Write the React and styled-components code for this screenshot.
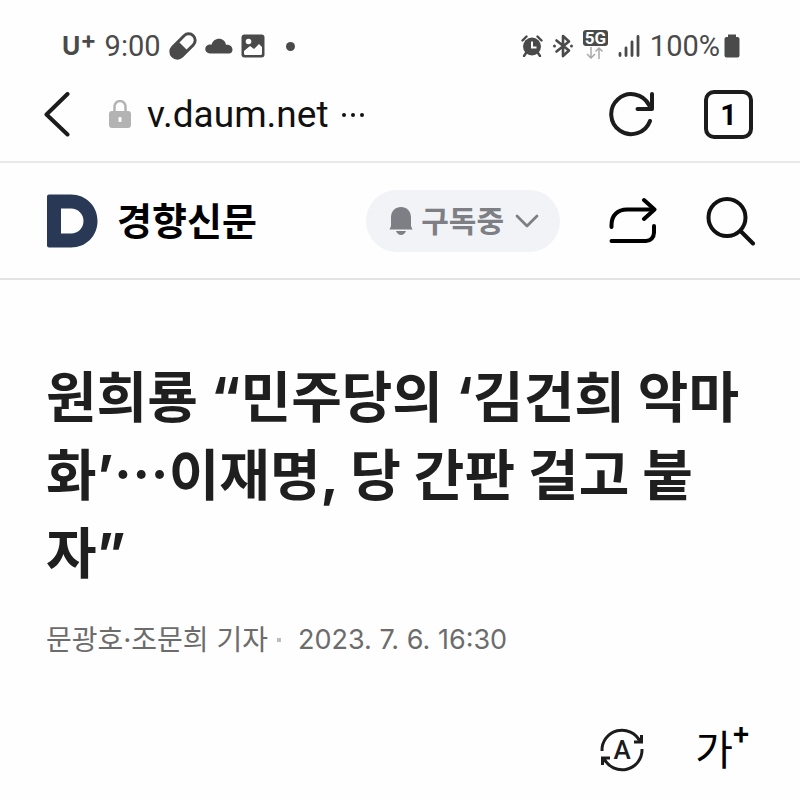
import React from "react";
import styled, { createGlobalStyle } from "styled-components";

const GlobalStyle = createGlobalStyle`
  * {
    box-sizing: border-box;
  }
  body {
    margin: 0;
    background-color: #fefefe;
    color: #1f1f1f;
    font-family: Inter, "Noto Sans CJK KR", sans-serif;
  }
  svg {
    display: block;
    flex-shrink: 0;
  }
`;

const StatusIcons = () => (
  <>
    <svg width="28" height="28" viewBox="0 0 28 28">
      <g transform="rotate(-45 14 14)">
        <rect x="-2" y="6" width="32" height="16" rx="8" fill="#4a4a4a" />
        <path d="M14 9h8a5 5 0 0 1 0 10h-8z" fill="#fefefe" />
      </g>
    </svg>
    <svg width="28" height="16" viewBox="0 0 28 16">
      <path
        d="M5 15.500a4.500 4.500 0 0 1-.5-9c.8 0 1.500.1 2 .3C7.500 3 10.500.8 14 .8c3.800 0 6.300 2.500 7 6 3.500-.3 6.500 1.500 6.500 5 0 2.200-1.500 3.700-3.500 3.700z"
        fill="#4a4a4a"
      />
    </svg>
    <svg width="24" height="24" viewBox="0 0 24 24">
      <rect x="0.500" y="0.500" width="23" height="23" rx="3" fill="#4a4a4a" />
      <circle cx="7.500" cy="7.500" r="2.800" fill="#fefefe" />
      <path d="M3 17l6-5 4 3 5-5 3 3v6.500a1.500 1.500 0 0 1-1.500 1.500h-15A1.500 1.500 0 0 1 3 19.500z" fill="#fefefe" />
    </svg>
  </>
);

const AlarmIcon = () => (
  <svg width="22" height="22" viewBox="0 0 22 22">
    <circle cx="11" cy="11.500" r="9" fill="#4a4a4a" />
    <path d="M1.500 5.500l4-4M20.500 5.500l-4-4M5 18l-2 3M17 18l2 3" stroke="#4a4a4a" strokeWidth="2.400" strokeLinecap="round" />
    <path d="M11 6.500v6h4.500" fill="none" stroke="#fefefe" strokeWidth="2" />
  </svg>
);

const BluetoothIcon = () => (
  <svg width="20" height="24" viewBox="0 0 20 24">
    <path d="M3.500 6.500L16 16.500l-6 5.500V2l6 5.500-12.500 10" fill="none" stroke="#4a4a4a" strokeWidth="2.600" strokeLinejoin="round" strokeLinecap="round" />
    <circle cx="1.500" cy="12" r="1.500" fill="#4a4a4a" />
    <circle cx="18.500" cy="12" r="1.500" fill="#4a4a4a" />
  </svg>
);

const DataArrows = () => (
  <svg width="18" height="12" viewBox="0 0 18 12">
    <path d="M5 0v10.500M1 7l4 4 4-4M13 12V1M9.500 4.500L13 1l3.500 3.500" fill="none" stroke="#a9a9a9" strokeWidth="1.500" />
  </svg>
);

const SignalIcon = () => (
  <svg width="22" height="22" viewBox="0 0 22 22">
    <path d="M2 18.500v2M8 13v7.500M14 7v13.500M20 1.500v19" stroke="#4a4a4a" strokeWidth="2.800" strokeLinecap="round" />
  </svg>
);

const BatteryIcon = () => (
  <svg width="16" height="24" viewBox="0 0 16 24">
    <path d="M4 .5h8v2.500h1.500A2 2 0 0 1 15.500 5v16.500a2 2 0 0 1-2 2h-11a2 2 0 0 1-2-2V5a2 2 0 0 1 2-2H4z" fill="#4a4a4a" />
  </svg>
);

const BackIcon = () => (
  <svg width="26" height="46" viewBox="0 0 26 46">
    <path d="M23.500 2L2.500 22.500l21 20" fill="none" stroke="#1c1c1c" strokeWidth="4" strokeLinecap="round" strokeLinejoin="round" />
  </svg>
);

const LockIcon = () => (
  <svg width="22" height="30" viewBox="0 0 22 30">
    <path d="M5.500 12V6.500a5.500 5.500 0 0 1 11 0V12" fill="none" stroke="#b3b3b3" strokeWidth="2.500" />
    <rect x="0" y="11" width="22" height="17" rx="3" fill="#b3b3b3" />
    <rect x="9.500" y="17" width="3" height="5" rx="1" fill="#fefefe" />
  </svg>
);

const ReloadIcon = () => (
  <svg width="46" height="46" viewBox="0 0 46 46">
    <path d="M41 29A20 20 0 1 1 40 13" fill="none" stroke="#1c1c1c" strokeWidth="4" strokeLinecap="round" />
    <path d="M43 2v15H28.500" fill="none" stroke="#1c1c1c" strokeWidth="4" strokeLinecap="round" strokeLinejoin="round" />
  </svg>
);

const DaumLogo = () => (
  <svg width="52" height="54" viewBox="0 0 52 54">
    <path
      d="M3 0.500H25C40 0.500 51.500 12 51.500 27S40 53.500 25 53.500H3A2 2 0 0 1 1 51.500V2.500A2 2 0 0 1 3 .5zM15 14.500V39.500H25C32 39.500 37.500 34 37.500 27S32 14.500 25 14.500z"
      fill="#293855"
      fillRule="evenodd"
    />
  </svg>
);

const BellIcon = () => (
  <svg width="24" height="30" viewBox="0 0 24 30">
    <path d="M.5 23.500L2 20V11.500C2 5 6.500 1 12 1s10 4 10 10.500V20l1.500 3.500z" fill="#7d7f84" />
    <path d="M7 25h10c-1 2.500-3 4-5 4s-4-1.500-5-4z" fill="#7d7f84" />
  </svg>
);

const ChevronIcon = () => (
  <svg width="24" height="14" viewBox="0 0 24 14">
    <path d="M2 2l10 10L22 2" fill="none" stroke="#7d7f84" strokeWidth="2.800" strokeLinecap="round" strokeLinejoin="round" />
  </svg>
);

const ShareIcon = () => (
  <svg width="48" height="48" viewBox="0 0 48 48">
    <g fill="none" stroke="#000" strokeWidth="4" strokeLinecap="round" strokeLinejoin="round">
      <path d="M2.500 30v-2C2.500 18 9 12.500 18 12.500H45" />
      <path d="M35 3L45.500 12.500 35 22" />
      <path d="M45 29v6.500c0 5-3.500 8.500-8 8.500H2.500" />
    </g>
  </svg>
);

const SearchIcon = () => (
  <svg width="50" height="50" viewBox="0 0 50 50">
    <circle cx="21" cy="21.500" r="18.500" fill="none" stroke="#111" strokeWidth="4" />
    <path d="M34.500 35L47 47.500" stroke="#111" strokeWidth="4" strokeLinecap="round" />
  </svg>
);

const TranslateIcon = () => (
  <svg width="46" height="46" viewBox="0 0 46 46">
    <g fill="none" stroke="#1c1c1c" strokeWidth="3">
      <path d="M3 24A20 20 0 0 1 41 14.500" />
      <path d="M43 22A20 20 0 0 1 5 31.500" />
      <path d="M42.500 8v7H35" />
      <path d="M3.500 38v-7H11" />
    </g>
    <text x="23" y="32" textAnchor="middle" fontFamily="Roboto" fontWeight="500" fontSize="26" fill="#1c1c1c">A</text>
  </svg>
);

const App = () => {
  return (
    <>
      <GlobalStyle />
      <StatusBar>
        <StatusGroup $gap={8}>
          <Carrier>U<sup>+</sup></Carrier>
          <StatusText>9:00</StatusText>
          <StatusIcons />
          <Dot />
        </StatusGroup>
        <StatusGroup $gap={10}>
          <AlarmIcon />
          <BluetoothIcon />
          <Network>
            <NetworkLabel>5G</NetworkLabel>
            <DataArrows />
          </Network>
          <SignalIcon />
          <Battery>
            <StatusText>100%</StatusText>
            <BatteryIcon />
          </Battery>
        </StatusGroup>
      </StatusBar>

      <AddressBar>
        <IconButton aria-label="뒤로"><BackIcon /></IconButton>
        <Address>
          <LockIcon />
          <Url>v.daum.net</Url>
          <More><i /><i /><i /></More>
        </Address>
        <Actions>
          <IconButton aria-label="새로고침"><ReloadIcon /></IconButton>
          <TabButton>1</TabButton>
        </Actions>
      </AddressBar>

      <Header>
        <Brand href="#">
          <DaumLogo />
          <Press>경향신문</Press>
        </Brand>
        <Subscribe>
          <BellIcon />
          <span>구독중</span>
          <ChevronIcon />
        </Subscribe>
        <Actions>
          <IconButton aria-label="공유"><ShareIcon /></IconButton>
          <IconButton aria-label="검색"><SearchIcon /></IconButton>
        </Actions>
      </Header>

      <Article>
        <Title>원희룡 “민주당의 ‘김건희 악마화’⋯이재명, 당 간판 걸고 붙자”</Title>
        <Info>
          <Reporter>문광호·조문희 기자</Reporter>
          <Separator />
          <time dateTime="2023-07-06T16:30">2023. 7. 6. 16:30</time>
        </Info>
        <Tools>
          <IconButton aria-label="번역"><TranslateIcon /></IconButton>
          <FontButton>가<sup>+</sup></FontButton>
        </Tools>
      </Article>
    </>
  );
};

const StatusBar = styled.div`
  display: flex;
  justify-content: space-between;
  height: 68px;
  padding: 24px 60px 0 62px;
`;

const StatusGroup = styled.div`
  display: flex;
  align-items: center;
  height: 44px;
  gap: ${(props) => props.$gap}px;
  color: #4a4a4a;
`;

const Carrier = styled.span`
  display: flex;
  font-family: Inter, sans-serif;
  font-size: 25px;
  font-weight: 700;
  line-height: 30px;
  sup {
    font-size: 24px;
    line-height: 18px;
  }
`;

const StatusText = styled.span`
  font-family: Roboto, sans-serif;
  font-size: 29px;
  line-height: 32px;
`;

const Dot = styled.span`
  width: 9px;
  height: 9px;
  margin-left: 13px;
  border-radius: 50%;
  background-color: #4a4a4a;
`;

const Network = styled.div`
  display: flex;
  flex-direction: column;
  align-items: center;
  gap: 1px;
  padding-bottom: 4px;
`;

const NetworkLabel = styled.span`
  width: 25px;
  border-radius: 3px;
  background-color: #4a4a4a;
  color: #fefefe;
  font-family: Roboto, sans-serif;
  font-size: 17px;
  font-weight: 700;
  line-height: 16px;
  text-align: center;
`;

const Battery = styled.div`
  display: flex;
  align-items: center;
  gap: 4px;
`;

const AddressBar = styled.div`
  display: flex;
  align-items: center;
  height: 95px;
  padding: 0 47px 0 44px;
  border-bottom: 2px solid #e8e8e8;
`;

const Address = styled.div`
  display: flex;
  flex: 1;
  align-items: center;
  padding-left: 39px;
`;

const Url = styled.span`
  margin: 0 13px 0 16px;
  color: #111;
  font-family: Roboto, sans-serif;
  font-size: 37px;
  line-height: 44px;
`;

const More = styled.span`
  display: flex;
  gap: 5px;
  i {
    width: 4px;
    height: 4px;
    border-radius: 50%;
    background-color: #111;
  }
`;

const Actions = styled.div`
  display: flex;
  align-items: center;
  gap: 49px;
`;

const IconButton = styled.button`
  padding: 0;
  border: none;
  background: none;
  cursor: pointer;
`;

const TabButton = styled.button`
  width: 49px;
  height: 49px;
  padding: 0;
  border: 4px solid #1c1c1c;
  border-radius: 10px;
  background: none;
  color: #000;
  font-family: Roboto, sans-serif;
  font-size: 29px;
  font-weight: 700;
  cursor: pointer;
`;

const Header = styled.header`
  display: flex;
  align-items: center;
  height: 117px;
  padding: 0 44px 0 46px;
  border-bottom: 2px solid #e4e4e4;
`;

const Brand = styled.a`
  display: flex;
  flex: 1;
  align-items: center;
  gap: 19px;
  color: #000;
  text-decoration: none;
`;

const Press = styled.strong`
  font-size: 38px;
  font-weight: 700;
  line-height: 50px;
`;

const Subscribe = styled.button`
  display: flex;
  align-items: center;
  gap: 8px;
  height: 62px;
  margin-right: 49px;
  padding: 0 21px 0 23px;
  border: none;
  border-radius: 31px;
  background-color: #f2f3f7;
  color: #7d7f84;
  font-family: inherit;
  font-size: 30px;
  font-weight: 700;
  line-height: 36px;
  cursor: pointer;
  svg:last-child {
    margin-left: 3px;
  }
`;

const Article = styled.main`
  padding: 78px 46px 0 46px;
`;

const Title = styled.h1`
  margin: 0;
  color: #1f1f1f;
  font-size: 55px;
  font-weight: 700;
  line-height: 78px;
  word-break: break-all;
`;

const Info = styled.div`
  display: flex;
  align-items: center;
  margin-top: 28px;
  color: #6c6c6c;
  font-size: 27px;
  line-height: 40px;
`;

const Reporter = styled.span`
  font-size: 28px;
`;

const Separator = styled.span`
  width: 4px;
  height: 4px;
  margin: 0 17px 0 9px;
  background-color: #bdbdbd;
`;

const Tools = styled.div`
  display: flex;
  align-items: center;
  justify-content: flex-end;
  gap: 50px;
  margin-top: 64px;
  padding-right: 5px;
`;

const FontButton = styled.button`
  display: flex;
  padding: 0;
  border: none;
  background: none;
  color: #000;
  font-family: inherit;
  font-size: 41px;
  line-height: 52px;
  cursor: pointer;
  sup {
    font-family: Roboto, sans-serif;
    font-size: 29px;
    font-weight: 500;
    line-height: 20px;
  }
`;

export default App;
